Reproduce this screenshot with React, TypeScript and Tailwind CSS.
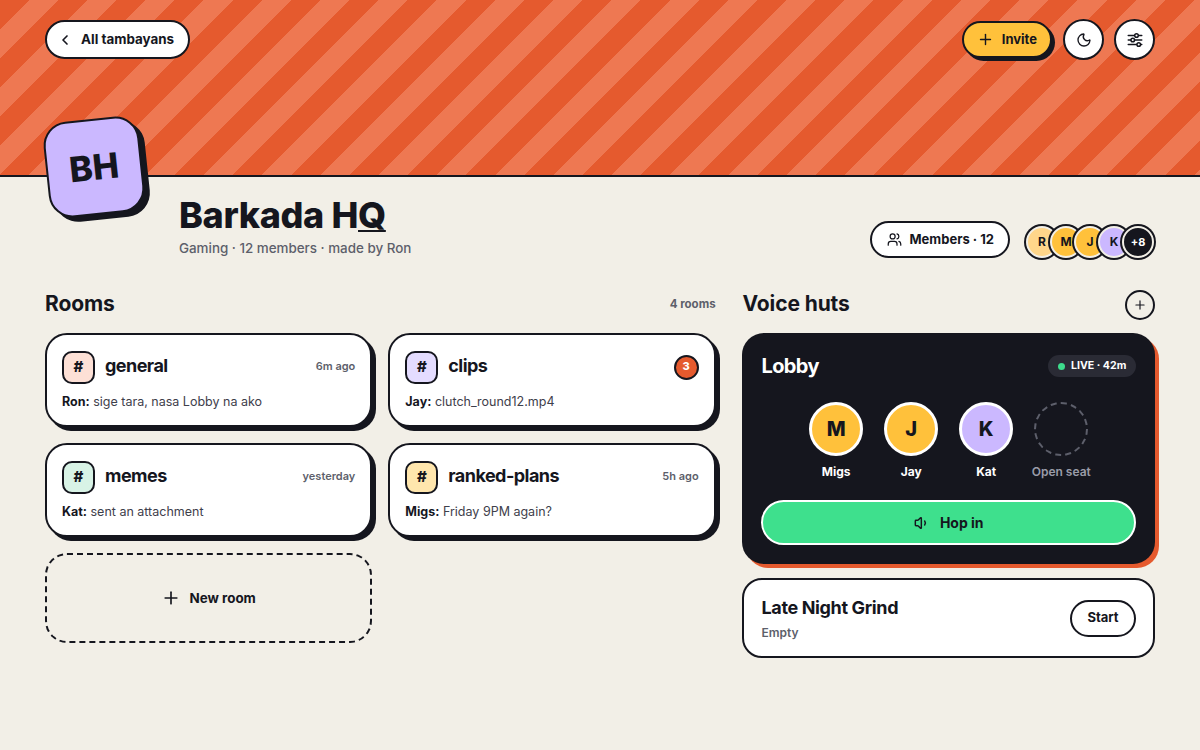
import { ChevronLeft, Moon, Plus, Users, Volume1 } from "lucide-react";

const rooms = [
  { name: "general", tint: "bg-[#fde0d6]", time: "6m ago", who: "Ron:", text: "sige tara, nasa Lobby na ako" },
  { name: "clips", tint: "bg-[#e4dcff]", badge: "3", who: "Jay:", text: "clutch_round12.mp4" },
  { name: "memes", tint: "bg-[#d8f3e6]", time: "yesterday", who: "Kat:", text: "sent an attachment" },
  { name: "ranked-plans", tint: "bg-[#ffe6ad]", time: "5h ago", who: "Migs:", text: "Friday 9PM again?" },
];

const stack = [
  { label: "R", tint: "bg-[#ffd68a]" },
  { label: "M", tint: "bg-[#ffc13b]" },
  { label: "J", tint: "bg-[#ffc13b]" },
  { label: "K", tint: "bg-[#cbb8ff]" },
];

const seats = [
  { label: "M", name: "Migs", tint: "bg-[#ffc13b]" },
  { label: "J", name: "Jay", tint: "bg-[#ffc13b]" },
  { label: "K", name: "Kat", tint: "bg-[#cbb8ff]" },
];

function RoomCard({ room }: { room: (typeof rooms)[number] }) {
  return (
    <div className="h-[94px] rounded-[22px] border-2 border-[#15161e] bg-white px-[15px] pt-[15px] shadow-[4px_4px_0_#15161e]">
      <div className="flex h-[34px] items-center">
        <div className={`flex h-[33px] w-[33px] items-center justify-center rounded-[10px] border-2 border-[#15161e] text-[15px] font-extrabold ${room.tint}`}>
          #
        </div>
        <div className="ml-[10px] pb-[3px] text-[18px] font-bold tracking-[-0.03em]">{room.name}</div>
        <div className="ml-auto">
          {room.badge ? (
            <div className="flex h-[25px] w-[25px] items-center justify-center rounded-full border-2 border-[#15161e] bg-[#e55a2e] pb-px text-[11px] font-extrabold text-white">
              {room.badge}
            </div>
          ) : (
            <div className="pb-px text-[11px] font-semibold text-[#5d5f6b]">{room.time}</div>
          )}
        </div>
      </div>
      <div className="mt-[8px] text-[12.5px] leading-[20px] text-[#3e404b]">
        <span className="font-bold text-[#15161e]">{room.who}</span> {room.text}
      </div>
    </div>
  );
}

export default function App() {
  return (
    <div className="h-[750px] overflow-hidden bg-[#f2efe7] font-['Inter',sans-serif] text-[#15161e]">
      {/* Banner */}
      <div className="flex h-[177px] items-start justify-between border-b-2 border-[#15161e] bg-[repeating-linear-gradient(135deg,#e55a2e_0_20.6px,#ee7852_20.6px_41.2px)] px-[45px] pt-[20px]">
        <button className="flex h-[39px] items-center gap-[8px] rounded-full border-2 border-[#15161e] bg-white pl-[10px] pr-[14px] text-[13.4px] font-bold">
          <ChevronLeft size={16} strokeWidth={2.5} />
          All tambayans
        </button>
        <div className="-mt-px flex items-center gap-[10px]">
          <button className="mr-[1px] flex h-[37px] items-center gap-[8px] rounded-full border-2 border-[#15161e] bg-[#ffc13b] pl-[13px] pr-[13px] text-[13px] font-bold shadow-[3px_3px_0_#15161e]">
            <Plus size={17} strokeWidth={2} />
            Invite
          </button>
          <button className="flex h-[41px] w-[41px] items-center justify-center rounded-full border-2 border-[#15161e] bg-white">
            <Moon size={16} strokeWidth={2} />
          </button>
          <button className="flex h-[41px] w-[41px] items-center justify-center rounded-full border-2 border-[#15161e] bg-white">
            <svg width="18" height="18" viewBox="0 0 24 24" fill="none" stroke="currentColor" strokeWidth="2" strokeLinecap="round">
              <path d="M3 6h18M3 12h18M3 18h18" />
              <circle cx="14" cy="6" r="2.4" fill="white" />
              <circle cx="9" cy="12" r="2.4" fill="white" />
              <circle cx="17" cy="18" r="2.4" fill="white" />
            </svg>
          </button>
        </div>
      </div>

      {/* Group header */}
      <div className="flex items-start px-[46px]">
        <div className="-mt-[58px] flex h-[96px] w-[96px] shrink-0 -rotate-6 items-center justify-center rounded-[24px] border-2 border-[#15161e] bg-[#cbb8ff] text-[35px] font-extrabold shadow-[5px_5px_0_#15161e]">
          BH
        </div>
        <div className="ml-[37px] pt-[16px]">
          <h1 className="text-[36px] leading-[44px] font-extrabold tracking-[-0.01em]">
            Barkada H<span className="underline decoration-2 underline-offset-2">Q</span>
          </h1>
          <div className="mt-[1px] text-[13.4px] leading-[20px] font-medium text-[#5d5f6b]">
            Gaming · 12 members · made by Ron
          </div>
        </div>
        <div className="ml-auto flex items-start pt-[44px]">
          <button className="flex h-[37px] items-center gap-[7px] rounded-full border-2 border-[#15161e] bg-white pl-[15px] pr-[14px] text-[13px] font-bold">
            <Users size={15} strokeWidth={2} />
            Members · 12
          </button>
          <div className="mt-[5px] ml-[16px] flex">
            {stack.map((a, i) => (
              <div
                key={a.label}
                className={`flex h-[32px] w-[32px] items-center justify-center rounded-full border-2 border-[#f2efe7] text-[12px] font-bold shadow-[0_0_0_2px_#15161e] ${a.tint} ${i > 0 ? "-ml-2" : ""}`}
              >
                {a.label}
              </div>
            ))}
            <div className="-ml-2 flex h-[32px] w-[32px] items-center justify-center rounded-full border-2 border-[#f2efe7] bg-[#15161e] text-[11px] font-bold text-white shadow-[0_0_0_2px_#15161e]">
              +8
            </div>
          </div>
        </div>
      </div>

      {/* Columns */}
      <div className="mt-[32px] grid grid-cols-[670.6px_412.5px] gap-[26.9px] pl-[45px]">
        <div>
          <div className="flex h-[30px] items-center justify-between">
            <h2 className="pb-[2px] text-[21px] font-bold tracking-[-0.005em]">Rooms</h2>
            <span className="text-[11.5px] font-bold text-[#5d5f6b]">4 rooms</span>
          </div>
          <div className="mt-[13px] grid grid-cols-2 gap-[16px]">
            {rooms.map((room) => (
              <RoomCard key={room.name} room={room} />
            ))}
            <button className="flex h-[90px] items-center justify-center gap-[8px] rounded-[22px] border-2 border-dashed border-[#15161e] text-[13.4px] font-bold">
              <Plus size={20} strokeWidth={2} />
              New room
            </button>
          </div>
        </div>

        <div>
          <div className="flex h-[30px] items-center justify-between">
            <h2 className="pb-[2px] text-[21px] font-bold tracking-[-0.005em]">Voice huts</h2>
            <button className="flex h-[30px] w-[30px] items-center justify-center rounded-full border-2 border-[#15161e]">
              <Plus size={14} strokeWidth={2} />
            </button>
          </div>
          <div className="mt-[13px] h-[231px] rounded-[22px] bg-[#15161e] px-[19px] pt-[19px] shadow-[4px_4px_0_#e55a2e]">
            <div className="flex h-[28px] items-center justify-between">
              <div className="text-[20px] font-bold tracking-[-0.03em] text-white">Lobby</div>
              <div className="flex h-[22px] w-[88px] items-center gap-[6px] rounded-full bg-[#2a2b35] pl-[10px] text-[10.6px] font-bold whitespace-nowrap text-white">
                <span className="h-[7px] w-[7px] rounded-full bg-[#3ddc8c]" />
                LIVE · 42m
              </div>
            </div>
            <div className="mt-[22px] flex justify-center gap-[21px]">
              {seats.map((s) => (
                <div key={s.name} className="flex w-[54px] flex-col items-center">
                  <div className={`flex h-[54px] w-[54px] items-center justify-center rounded-full border-[3px] border-white text-[20px] font-extrabold ${s.tint}`}>
                    {s.label}
                  </div>
                  <div className="mt-[8px] text-[12px] leading-[16px] font-bold text-white">{s.name}</div>
                </div>
              ))}
              <div className="flex w-[54px] flex-col items-center">
                <div className="h-[54px] w-[54px] rounded-full border-2 border-dashed border-[#5d5f6b]" />
                <div className="mt-[8px] text-[12px] leading-[16px] font-semibold whitespace-nowrap text-[#9a9ca8]">Open seat</div>
              </div>
            </div>
            <button className="mt-[20px] flex h-[45px] w-full items-center justify-center gap-[10px] rounded-full border-2 border-white bg-[#3ee08d] text-[14px] font-bold">
              <Volume1 size={16} strokeWidth={2.2} />
              Hop in
            </button>
          </div>
          <div className="mt-[14px] flex h-[80px] items-center justify-between rounded-[20px] border-2 border-[#15161e] bg-white px-[17px]">
            <div>
              <div className="text-[18px] leading-[24px] font-bold tracking-[-0.02em]">Late Night Grind</div>
              <div className="mt-[5px] text-[12px] leading-[16px] font-semibold text-[#5d5f6b]">Empty</div>
            </div>
            <button className="flex h-[37px] w-[66px] items-center justify-center rounded-full border-2 border-[#15161e] bg-white text-[13px] font-bold">
              Start
            </button>
          </div>
        </div>
      </div>
    </div>
  );
}
